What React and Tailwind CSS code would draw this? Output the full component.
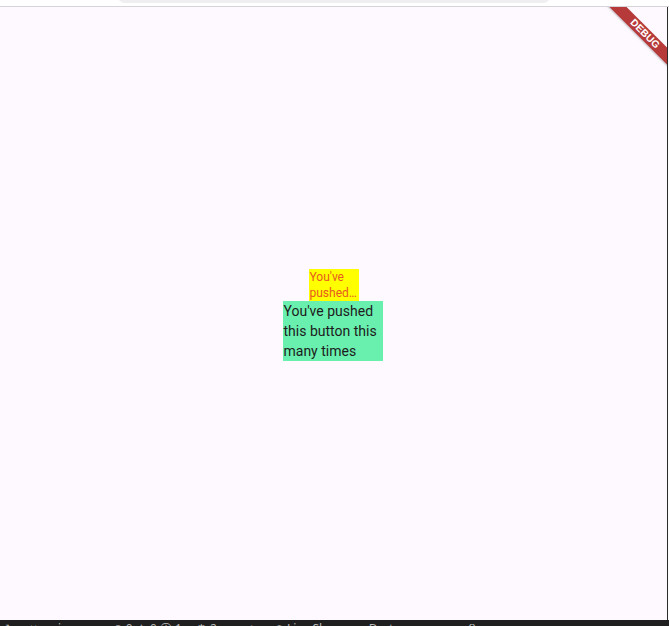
import React from "react";

export default function App() {
  return (
    <div className="w-[669px] h-[626px] flex flex-col overflow-hidden bg-white" style={{ fontFamily: "Roboto, 'Noto Sans', sans-serif" }}>
      {/* top chrome */}
      <div className="h-[6px] bg-white relative shrink-0 flex justify-center">
        <div className="absolute left-[118px] w-[432px] top-[-10px] h-[13px] rounded-[8px] bg-[#efeff2]" />
      </div>
      <div className="h-px bg-[#d6d4d8] shrink-0" />
      <div className="flex flex-1 min-h-0">
        {/* app area */}
        <div className="relative flex-1 bg-[#fef9fe] overflow-hidden flex items-center justify-center">
          <div className="flex flex-col items-center mr-[2px] mt-[2px]">
            <div className="w-[50px] bg-[#ffff00] text-[12px] leading-[16px] text-[#e85a20] line-clamp-2 translate-x-[1px] pl-px">
              You've pushed this button this many times
            </div>
            <div className="w-[100px] bg-[#69f0ae] text-[14px] leading-[20px] text-[#1d1b20] pl-px">
              You've pushed this button this many times
            </div>
          </div>
          {/* debug banner */}
          <div className="absolute left-[597px] top-[21px] w-[96px] h-[12px] bg-[#b73a3a] rotate-45 flex items-center justify-center shadow-[0_1px_2px_rgba(0,0,0,0.25)]">
            <span className="text-white font-bold text-[10px] leading-[12px] tracking-[0.2px]" style={{ fontFamily: "'Liberation Sans', Arial, sans-serif" }}>DEBUG</span>
          </div>
        </div>
        <div className="w-px bg-[#2b2b2b] shrink-0" />
        <div className="w-px bg-white shrink-0" />
      </div>
      {/* bottom status bar */}
      <div className="h-[6px] bg-[#1f1f1f] shrink-0 relative overflow-hidden">
        <div className="absolute left-0 top-[1px] flex gap-[14px] text-[12px] leading-[16px] text-[#b8b8b8] whitespace-nowrap" style={{ fontFamily: "'Noto Sans', sans-serif" }}>
          <span>⤢</span>
          <span className="ml-[6px]">⑂ main ⟳</span>
          <span className="ml-[20px]">⊗ 0 ⚠ 0 ⓘ 1</span>
          <span>⚙ 2</span>
          <span className="ml-[20px]">▷</span>
          <span>◎ Live Share</span>
          <span className="ml-[10px]">Dart</span>
          <span className="ml-[60px]">{"{}"}</span>
        </div>
      </div>
    </div>
  );
}
